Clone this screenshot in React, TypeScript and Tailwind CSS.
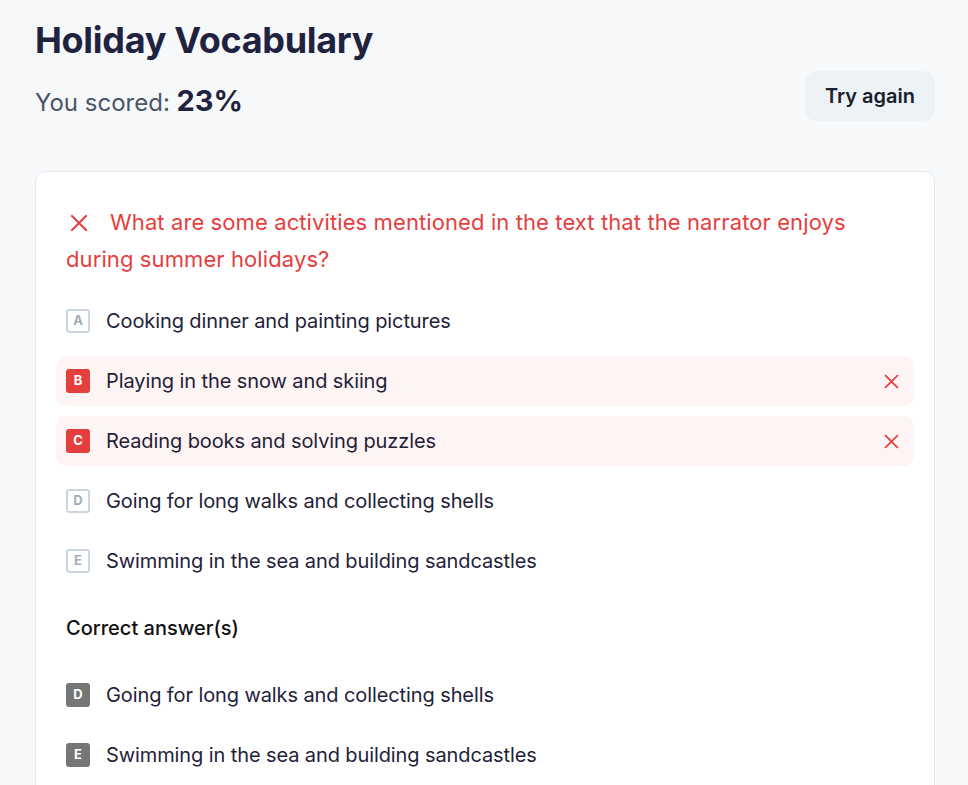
type Option = { letter: string; text: string };

const OPTIONS: Option[] = [
  { letter: "A", text: "Cooking dinner and painting pictures" },
  { letter: "B", text: "Playing in the snow and skiing" },
  { letter: "C", text: "Reading books and solving puzzles" },
  { letter: "D", text: "Going for long walks and collecting shells" },
  { letter: "E", text: "Swimming in the sea and building sandcastles" },
];

const WRONG = ["B", "C"];
const CORRECT = ["D", "E"];

function Cross({ size = 18 }: { size?: number }) {
  return (
    <svg width={size} height={size} viewBox="0 0 18 18" fill="none" stroke="#e53e3e" strokeWidth="2" strokeLinecap="square">
      <path d="M2 2L16 16M16 2L2 16" />
    </svg>
  );
}

function OptionRow({ opt, variant }: { opt: Option; variant: "idle" | "wrong" | "correct" }) {
  const badge =
    variant === "wrong"
      ? "bg-[#e53e3e] text-white"
      : variant === "correct"
      ? "bg-[#767676] text-white"
      : "border-2 border-[#cbd5e1] text-[#a0aec0]";
  return (
    <div
      className={
        "h-[50px] flex items-center pl-[10px] pr-[15px] rounded-[10px] " +
        (variant === "wrong" ? "bg-[#fff4f4]" : "")
      }
    >
      <div className={"w-6 h-6 rounded-[3px] flex items-center justify-center text-[13px] font-bold shrink-0 " + badge}>
        {opt.letter}
      </div>
      <span className="ml-4 text-[20px] tracking-[-0.1px] text-[#1f2238]">{opt.text}</span>
      {variant === "wrong" && (
        <span className="ml-auto">
          <Cross size={15} />
        </span>
      )}
    </div>
  );
}

export default function App() {
  return (
    <div className="min-h-screen bg-[#f7f8fa] pl-[35px] pr-[33px] pt-[20px]" style={{ fontFamily: "Inter, 'Noto Sans', sans-serif" }}>
      <div className="flex items-end justify-between">
        <div>
          <h1 className="text-[36px] leading-[40px] font-bold text-[#1f2340] tracking-[-0.3px]">Holiday Vocabulary</h1>
          <p className="mt-[25px] leading-[32px] text-[24px] text-[#4a5568]">
            You scored: <span className="text-[29px] font-bold text-[#1f2340]">23%</span>
          </p>
        </div>
        <button className="w-[130px] h-[50px] rounded-xl bg-[#edf2f7] text-[20px] font-semibold text-[#1a202c] mb-[-2px]">
          Try again
        </button>
      </div>

      <div className="mt-[52px] bg-white border border-[#e2e8f0] rounded-[10px] px-5 pt-[32px] pb-10">
        <p className="pl-[10px] pr-[50px] text-[22px] leading-[37px] tracking-[0.1px] text-[#e53e3e]">
          <span className="inline-block align-[-2px] ml-[4px] mr-[22px]">
            <Cross />
          </span>
          What are some activities mentioned in the text that the narrator enjoys during summer holidays?
        </p>

        <div className="mt-[18px] flex flex-col gap-[10px]">
          {OPTIONS.map((o) => (
            <OptionRow key={o.letter} opt={o} variant={WRONG.includes(o.letter) ? "wrong" : "idle"} />
          ))}
        </div>

        <p className="mt-[28px] pl-[10px] text-[20px] leading-[28px] font-medium text-[#111111]">Correct answer(s)</p>

        <div className="mt-[28px] flex flex-col gap-[10px]">
          {OPTIONS.filter((o) => CORRECT.includes(o.letter)).map((o) => (
            <OptionRow key={o.letter} opt={o} variant="correct" />
          ))}
        </div>
      </div>
    </div>
  );
}
